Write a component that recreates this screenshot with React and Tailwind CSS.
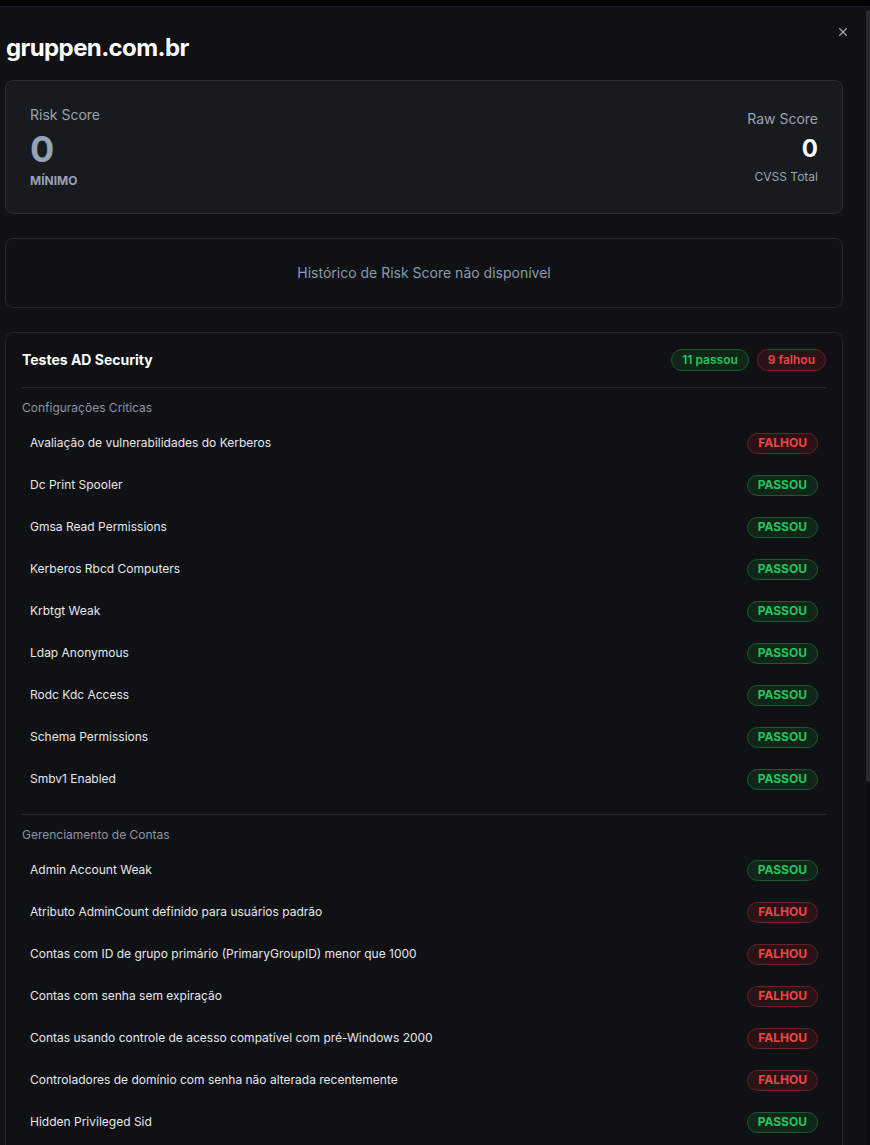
import { X } from "lucide-react";

const critical = [
  ["Avaliação de vulnerabilidades do Kerberos", false],
  ["Dc Print Spooler", true],
  ["Gmsa Read Permissions", true],
  ["Kerberos Rbcd Computers", true],
  ["Krbtgt Weak", true],
  ["Ldap Anonymous", true],
  ["Rodc Kdc Access", true],
  ["Schema Permissions", true],
  ["Smbv1 Enabled", true],
];

const accounts = [
  ["Admin Account Weak", true],
  ["Atributo AdminCount definido para usuários padrão", false],
  ["Contas com ID de grupo primário (PrimaryGroupID) menor que 1000", false],
  ["Contas com senha sem expiração", false],
  ["Contas usando controle de acesso compatível com pré-Windows 2000", false],
  ["Controladores de domínio com senha não alterada recentemente", false],
  ["Hidden Privileged Sid", true],
];

function StatusBadge({ ok }) {
  return ok ? (
    <span className="inline-flex items-center h-[21px] px-[10px] rounded-full border border-[#1d5a32] bg-[#0f2618] text-[#22c55e] text-[12px] font-bold">
      PASSOU
    </span>
  ) : (
    <span className="inline-flex items-center h-[21px] px-[10px] rounded-full border border-[#6b2226] bg-[#2a1316] text-[#ef4444] text-[12px] font-bold">
      FALHOU
    </span>
  );
}

function Section({ title, rows, first }) {
  return (
    <div className={first ? "pt-3" : "mt-[14px] border-t border-[#272a30] pt-3"}>
      <div className="text-[12px] leading-4 text-[#8b95a3] mb-[6px]">{title}</div>
      {rows.map(([name, ok]) => (
        <div key={name} className="flex items-center justify-between h-[42px] px-2">
          <span className="text-[12px] text-[#e6e8eb]">{name}</span>
          <StatusBadge ok={ok} />
        </div>
      ))}
    </div>
  );
}

export default function App() {
  return (
    <div className="h-[1145px] overflow-hidden bg-black flex flex-col font-['Inter',sans-serif]">
      {/* ── top strip ─────────────────────────────────────────────────── */}
      <div className="h-[7px] bg-[#040405] border-b border-[#1d2026]" />

      <div className="flex flex-1 min-h-0">
        {/* ── modal body ──────────────────────────────────────────────── */}
        <div className="relative flex-1 bg-[#0f1115] pl-[5px] pr-[23px] pt-[25px]">
          <button className="absolute right-[16px] top-[18px] text-[#9ca3af]">
            <X size={14} strokeWidth={2} />
          </button>

          <h1 className="text-[24px] leading-8 font-bold text-white tracking-[-0.6px] mb-[16px] pl-[1px]">
            gruppen.com.br
          </h1>

          {/* score card */}
          <div className="rounded-lg border border-[#2a2f37] bg-[#171a1f] px-6 py-6 flex items-center justify-between mb-6">
            <div className="flex flex-col">
              <span className="text-[14px] leading-5 text-[#9ca3af]">Risk Score</span>
              <span className="text-[36px] leading-10 font-bold text-[#94a3b8] mt-1">0</span>
              <span className="text-[12px] leading-4 font-bold text-[#94a3b8] mt-1">MÍNIMO</span>
            </div>
            <div className="flex flex-col items-end">
              <span className="text-[14px] leading-5 text-[#9ca3af]">Raw Score</span>
              <span className="text-[24px] leading-8 font-bold text-white mt-1">0</span>
              <span className="text-[12px] leading-4 text-[#9ca3af] mt-1">CVSS Total</span>
            </div>
          </div>

          {/* history */}
          <div className="rounded-lg border border-[#262a31] bg-[#0f1115] py-6 text-center text-[14px] leading-5 text-[#8b9aae] mb-6">
            Histórico de Risk Score não disponível
          </div>

          {/* tests */}
          <div className="rounded-lg border border-[#23262c] bg-[#0f1115] p-4">
            <div className="flex items-center justify-between pb-4 border-b border-[#272a30]">
              <h2 className="text-[14px] leading-[22px] font-bold text-white">Testes AD Security</h2>
              <div className="flex items-center gap-2">
                <span className="inline-flex items-center h-[22px] px-[10px] rounded-full border border-[#1d5a32] bg-[#0f2618] text-[#22c55e] text-[12px] font-semibold">
                  11 passou
                </span>
                <span className="inline-flex items-center h-[22px] px-[10px] rounded-full border border-[#6b2226] bg-[#2a1316] text-[#ef4444] text-[12px] font-semibold">
                  9 falhou
                </span>
              </div>
            </div>
            <Section title="Configurações Críticas" rows={critical} first />
            <Section title="Gerenciamento de Contas" rows={accounts} />
          </div>
        </div>

        {/* ── scrollbar ───────────────────────────────────────────────── */}
        <div className="w-[4px] bg-[#0d0f12] flex flex-col">
          <div className="h-[3px]" />
          <div className="h-[772px] bg-[#262930] rounded-sm" />
        </div>
      </div>
    </div>
  );
}
